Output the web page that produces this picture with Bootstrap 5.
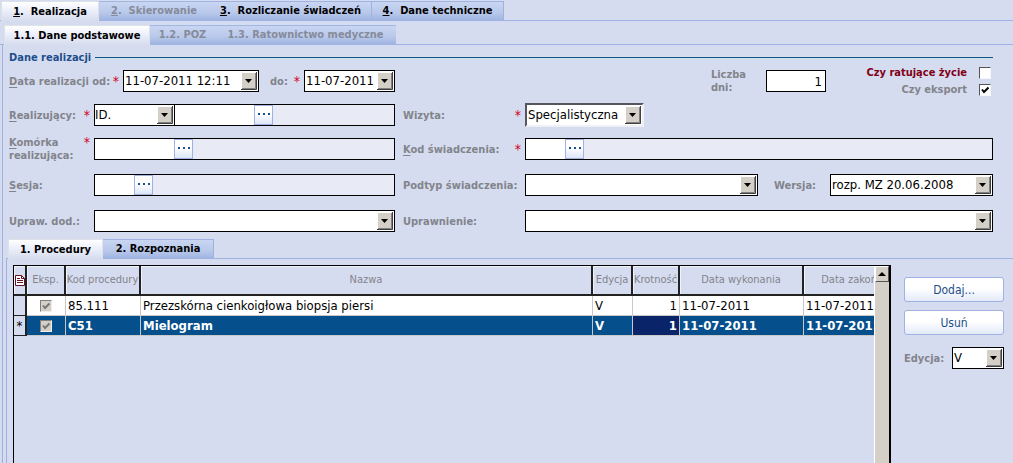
<!DOCTYPE html>
<html lang="pl">
<head>
<meta charset="utf-8">
<meta name="viewport" content="width=device-width, initial-scale=1">
<title>Realizacja świadczenia</title>
<link href="https://cdn.jsdelivr.net/npm/bootstrap@5.3.0/dist/css/bootstrap.min.css" rel="stylesheet">
<style>
:root { --ground: #d6dcef; --edge: #a0b2e2; --navy: #1d4f8c; --muted-ink: #82848c; }
body { font: 11px/14px "DejaVu Sans Condensed", "DejaVu Sans", sans-serif; background: var(--ground); color: #000; overflow: hidden; }
button, input, select { font: inherit; color: inherit; border-radius: 0; }

/* tab strips */
.strip { border-bottom: 1px solid var(--edge); flex-wrap: nowrap; height: 20px; }
.strip .nav-link { height: 19px; padding: 0; margin: 0; border: 1px solid var(--edge); border-width: 1px 1px 0 0; border-radius: 0;
  background: linear-gradient(#c9d6f2, #b9c8ea 60%, #9fb5e2); color: #000; font-weight: bold; line-height: 16px; white-space: pre; }
.strip .nav-link.active { height: 20px; border-left-width: 1px; background: linear-gradient(#fff, #eef1fb 40%, var(--ground)); line-height: 20px; color: #000; }
.strip .nav-link:disabled { color: #858b9b; }
.strip-main { height: 21px; padding-left: 1px; padding-top: 1px; }
.w-a { width: 98px; } .w-b { width: 111px; } .w-c { width: 162px; } .w-d { width: 132px; }
.w-e { width: 146px; } .w-f { width: 66px; } .w-g { width: 180px; }
.w-h { width: 95px; } .w-i { width: 111px; }
.page-pane { border-left: 1px solid var(--edge); margin-left: 2px; }
.proc-pane { border-left: 1px solid var(--edge); margin-left: 3px; padding: 6px 9px 0 6px; }
.proc-strip { margin: 7px 0 0 3px; padding-left: 2px; }

/* form */
.group-title { color: var(--navy); font-weight: bold; padding: 0 20px 0 6px; height: 25px; }
.group-title::after { content: ""; flex: 1; height: 1px; background: #17577f; box-shadow: 0 1px #c4e2f4; margin-left: 4px; }
.form-area { padding: 0 20px 0 6px; }
.line-a { margin-bottom: 12px; } .line-b { margin-bottom: 14px; }
.form-line, .cell { display: flex; align-items: center; height: 22px; min-width: 0; }
.cell-left { width: 386px; flex: none; margin-right: 8px; }
.cell-right { flex: 1; }
.cap { color: var(--muted-ink); font-weight: bold; white-space: nowrap; flex: none; line-height: 13px; }
.cap-left { width: 85px; } .cap-right { width: 122px; }
.cap-from { width: 114px; }
.cap-to { width: 45px; padding-left: 11px; }
.cap u { text-underline-offset: 2px; }
.star { color: #d00020; align-self: flex-start; font-weight: normal; font-size: 14px; line-height: 12px; }
.with-star { display: flex; justify-content: space-between; padding-right: 4px; }
.box { height: 22px; border: 1px solid #000; background: #fff; padding: 0 3px; font-size: 13px; min-width: 0; outline: 0; }
select.box { appearance: none; padding: 0 17px 0 1px; background: #fff url("data:image/svg+xml,%3Csvg xmlns='http://www.w3.org/2000/svg' width='16' height='18'%3E%3Cpath fill='%23d4d0c8' d='M0 0h16v18H0z'/%3E%3Cpath stroke='%23fff' fill='none' d='M.5 17V.5H15'/%3E%3Cpath stroke='%23404040' fill='none' d='M0 17.5h15.500V0'/%3E%3Cpath stroke='%23808080' fill='none' d='M1 16.500h13.500V1'/%3E%3Cpath d='M4 7h7L7.500 11z'/%3E%3C/svg%3E") no-repeat right 1px center; }
.lookup { display: flex; flex: 1; height: 22px; border: 1px solid #000; background: #e8ebf6; min-width: 0; }
.lookup input { border: 0; background: #fff; padding: 0 3px; height: 20px; outline: 0; }
.lookup select.box { height: 20px; border-width: 0 1px 0 0; width: 80px; padding-left: 0; }
.dots { width: 19px; height: 20px; padding: 0; border: 1px solid var(--edge); background: linear-gradient(#fff 40%, #dde6f8); color: var(--navy); display: flex; justify-content: center; padding-top: 7px; }
.i-s { width: 39px; } .i-m { width: 79px; }
.date-a { width: 136px; } .date-b { width: 91px; }
.days { width: 60px; } .checks { width: 167px; }
.visit { width: 119px; } .version { width: 163px; } .edition { width: 52px; } .cap-version { width: 56px; }
.urgent { color: #800018; font-weight: bold; }
.sunken.box { border: 2px solid; border-color: #55565c #eef0f6 #eef0f6 #55565c; height: 24px; }
.tick { appearance: none; margin: 0; width: 12px; height: 12px; flex: none; background: #fff; border: 1px solid; border-color: #555 #f6f7fb #f6f7fb #555; display: block; }
.tick:checked { background: #fff url("data:image/svg+xml,%3Csvg xmlns='http://www.w3.org/2000/svg' width='10' height='10'%3E%3Cpath d='M2 4.500L4 7 8.500 2.500' stroke='%23000' stroke-width='2' fill='none'/%3E%3C/svg%3E") center no-repeat; }
.tick:disabled { border-color: #808080 #eee #eee #808080; background: #d4d0c8 url("data:image/svg+xml,%3Csvg xmlns='http://www.w3.org/2000/svg' width='10' height='10'%3E%3Cpath d='M2 4.500L4 7 8.500 2.500' stroke='%23777' stroke-width='2' fill='none'/%3E%3C/svg%3E") center no-repeat; }
.check-row { display: flex; justify-content: flex-end; gap: 12px; height: 17px; align-items: center; padding-right: 2px; }

/* procedure grid */
.grid-frame { flex: 1; min-width: 0; border: 1px solid #000; border-right-width: 2px; border-bottom: 0; display: flex; }
.grid-view { flex: 1; min-width: 0; overflow: hidden; }
.proc-grid { table-layout: fixed; width: calc(100% + 54px); border-collapse: separate; border-spacing: 0; white-space: nowrap; }
.proc-grid th { height: 30px; font-weight: normal; font-size: 11px; color: var(--muted-ink); text-align: center; border-right: 2px solid #222; border-bottom: 2px solid #222; padding: 0; box-shadow: inset 1px 1px #f1f3fb; }
.proc-grid td { height: 20px; padding: 0 2px; font-size: 13px; line-height: 18px; background: #fff; border-right: 1px solid #c8c8c8; border-bottom: 1px solid #c8c8c8; overflow: hidden; }
.proc-grid td:first-child { background: var(--ground); border-right: 2px solid #222; border-bottom-color: #222; color: #000; padding: 0; text-align: center; }
.proc-grid .picked td:not(:first-child) { background: #05508c; color: #fff; font-weight: bold; }
.proc-grid .picked td.num { background: #0a246a; }
.num { text-align: right; }
.proc-grid .tick { margin: 0 auto; }
.scroller { width: 15px; background: #d4d0c8; border-left: 1px solid #fff; flex: none; }
.scroller button { display: block; width: 14px; height: 16px; padding: 0; border: 1px solid; border-color: #fff #555 #555 #fff; background: #d4d0c8; line-height: 0; }
.side { width: 100px; margin: 12px 0 0 13px; flex: none; }
.act { width: 100%; height: 25px; border: 1px solid var(--edge); border-radius: 3px; padding: 0; margin-bottom: 8px; color: var(--navy); background: linear-gradient(#fff 45%, #e3eaf9); font-size: 12px; line-height: 20px; }
</style>
</head>
<body>
<main class="d-flex flex-column vh-100">
  <nav class="nav nav-tabs strip strip-main" aria-label="Główne">
    <button class="nav-link active w-a"><u>1</u>.  Realizacja</button>
    <button class="nav-link w-b" disabled><u>2</u>.  Skierowanie</button>
    <button class="nav-link w-c"><u>3</u>.  Rozliczanie świadczeń</button>
    <button class="nav-link w-d"><u>4</u>.  Dane techniczne</button>
  </nav>
  <nav class="nav nav-tabs strip mt-1 ps-1" aria-label="Realizacja">
    <button class="nav-link active w-e">1.1. Dane podstawowe</button>
    <button class="nav-link w-f" disabled>1.2. POZ</button>
    <button class="nav-link w-g" disabled>1.3. Ratownictwo medyczne</button>
  </nav>

  <div class="page-pane d-flex flex-column flex-grow-1">
    <div class="group-title d-flex align-items-center"><span>Dane realizacji</span></div>
    <form class="form-area">
      <div class="form-line line-a">
        <div class="cell cell-left">
          <label class="cap cap-from with-star" for="od"><span><u>D</u>ata realizacji od:</span><span class="star">*</span></label>
          <select class="box date-a" id="od"><option>11-07-2011 12:11</option></select>
          <label class="cap cap-to with-star" for="do"><span>do:</span><span class="star">*</span></label>
          <select class="box date-b" id="do"><option>11-07-2011</option></select>
        </div>
        <div class="cell cell-right justify-content-end">
          <label class="cap me-3" for="dni">Liczba<br>dni:</label>
          <input class="box num days ms-1" id="dni" value="1">
          <div class="checks">
            <div class="check-row"><label class="urgent" for="zycie">Czy ratujące życie</label><input class="tick" type="checkbox" id="zycie"></div>
            <div class="check-row"><label class="cap" for="eksport">Czy eksport</label><input class="tick" type="checkbox" id="eksport" checked></div>
          </div>
        </div>
      </div>
      <div class="form-line line-a">
        <div class="cell cell-left">
          <label class="cap cap-left with-star" for="realizujacy"><span><u>R</u>ealizujący:</span><span class="star">*</span></label>
          <div class="lookup"><select class="box" id="realizujacy"><option>ID.</option></select><input class="i-m" aria-label="Identyfikator"><button type="button" class="dots" aria-label="Wybierz"><svg width="12" height="4" fill="currentColor"><path d="M0 0h2v2H0zM5 0h2v2H5zM10 0h2v2h-2z"/></svg></button></div>
        </div>
        <div class="cell cell-right">
          <label class="cap cap-right with-star" for="wizyta"><span>Wizyta:</span><span class="star">*</span></label>
          <select class="box sunken visit" id="wizyta"><option>Specjalistyczna</option></select>
        </div>
      </div>
      <div class="form-line line-b">
        <div class="cell cell-left">
          <label class="cap cap-left with-star" for="komorka"><span><u>K</u>omórka<br>realizująca:</span><span class="star">*</span></label>
          <div class="lookup"><input class="i-m" id="komorka"><button type="button" class="dots" aria-label="Wybierz"><svg width="12" height="4" fill="currentColor"><path d="M0 0h2v2H0zM5 0h2v2H5zM10 0h2v2h-2z"/></svg></button></div>
        </div>
        <div class="cell cell-right">
          <label class="cap cap-right with-star" for="kod"><span><u>K</u>od świadczenia:</span><span class="star">*</span></label>
          <div class="lookup"><input class="i-s" id="kod"><button type="button" class="dots" aria-label="Wybierz"><svg width="12" height="4" fill="currentColor"><path d="M0 0h2v2H0zM5 0h2v2H5zM10 0h2v2h-2z"/></svg></button></div>
        </div>
      </div>
      <div class="form-line line-b">
        <div class="cell cell-left">
          <label class="cap cap-left" for="sesja"><u>S</u>esja:</label>
          <div class="lookup"><input class="i-s" id="sesja"><button type="button" class="dots" aria-label="Wybierz"><svg width="12" height="4" fill="currentColor"><path d="M0 0h2v2H0zM5 0h2v2H5zM10 0h2v2h-2z"/></svg></button></div>
        </div>
        <div class="cell cell-right">
          <label class="cap cap-right" for="podtyp">Podtyp świadczenia:</label>
          <select class="box flex-grow-1" id="podtyp"><option></option></select>
          <label class="cap cap-version ms-3" for="wersja">Wersja:</label>
          <select class="box version" id="wersja"><option>rozp. MZ 20.06.2008</option></select>
        </div>
      </div>
      <div class="form-line">
        <div class="cell cell-left">
          <label class="cap cap-left" for="dod">Upraw. dod.:</label>
          <select class="box flex-grow-1" id="dod"><option></option></select>
        </div>
        <div class="cell cell-right">
          <label class="cap cap-right" for="upr">Uprawnienie:</label>
          <select class="box flex-grow-1" id="upr"><option></option></select>
        </div>
      </div>
    </form>

    <nav class="nav nav-tabs strip proc-strip" aria-label="Procedury i rozpoznania">
      <button class="nav-link active w-h">1. Procedury</button>
      <button class="nav-link w-i">2. Rozpoznania</button>
    </nav>
    <section class="proc-pane d-flex flex-grow-1">
      <div class="grid-frame">
        <div class="grid-view">
          <table class="proc-grid">
            <colgroup><col style="width:13px"><col style="width:39px"><col style="width:75px"><col><col style="width:40px"><col style="width:47px"><col style="width:124px"><col style="width:124px"></colgroup>
            <thead>
              <tr>
                <th><svg width="10" height="11" fill="none" stroke="#6b1020"><path fill="#fff" d="M.5.500h6l3 3v7h-9z"/><path d="M6.500.500v3h3M2 3.500h3M2 5.500h6M2 7.500h6"/></svg></th>
                <th>Eksp.</th><th>Kod procedury</th><th>Nazwa</th><th>Edycja</th><th>Krotność</th><th>Data wykonania</th><th>Data zakończenia</th>
              </tr>
            </thead>
            <tbody>
              <tr><td></td><td><input class="tick" type="checkbox" checked disabled aria-label="Eksport 85.111"></td><td>85.111</td><td>Przezskórna cienkoigłowa biopsja piersi</td><td>V</td><td class="num">1</td><td>11-07-2011</td><td>11-07-2011</td></tr>
              <tr class="picked"><td>*</td><td><input class="tick" type="checkbox" checked disabled aria-label="Eksport C51"></td><td>C51</td><td>Mielogram</td><td>V</td><td class="num">1</td><td>11-07-2011</td><td>11-07-2011</td></tr>
            </tbody>
          </table>
        </div>
        <div class="scroller"><button type="button" aria-label="W górę"><svg width="8" height="4"><path d="M0 4h8L4 0z"/></svg></button></div>
      </div>
      <aside class="side">
        <button type="button" class="act">Dodaj...</button>
        <button type="button" class="act">Usuń</button>
        <div class="d-flex align-items-center justify-content-between mt-1"><label class="cap" for="edycja">Edycja:</label><select class="box edition" id="edycja"><option>V</option></select></div>
      </aside>
    </section>
  </div>
</main>
<script src="https://cdn.jsdelivr.net/npm/bootstrap@5.3.0/dist/js/bootstrap.bundle.min.js"></script>
</body>
</html>
